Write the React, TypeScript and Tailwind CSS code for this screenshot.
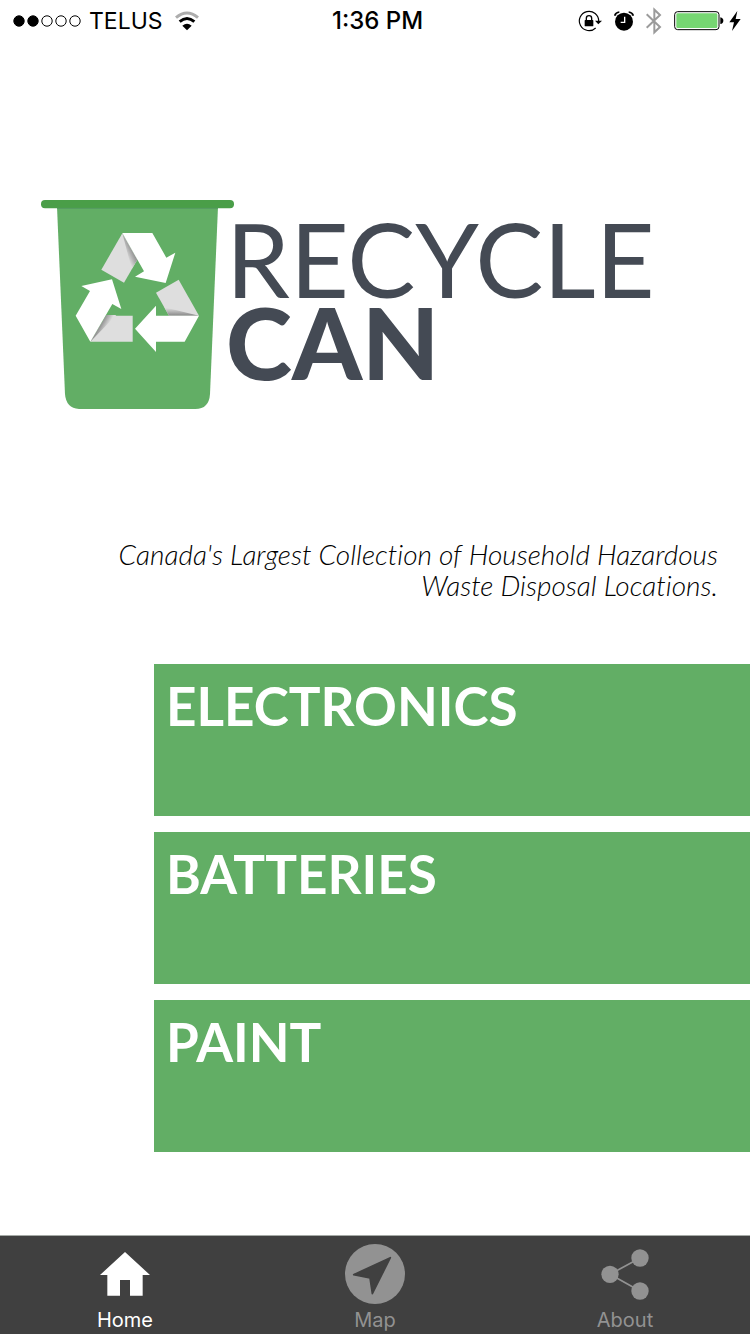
import type { ReactNode } from "react";

function StatusBar() {
  return (
    <header className="grid h-[41px] grid-cols-[1fr_auto_1fr] items-center pl-[13px] pr-2 font-['Inter',sans-serif] text-2xl leading-10 text-black">
      <div className="flex items-center">
        <svg width="68" height="12" viewBox="0 0 68 12" role="img" aria-label="Signal strength" fill="none" stroke="#000">
          <circle cx="6" cy="6" r="5.2" fill="#000" />
          <circle cx="20" cy="6" r="5.2" fill="#000" />
          <circle cx="34" cy="6" r="5.2" />
          <circle cx="48" cy="6" r="5.2" />
          <circle cx="62" cy="6" r="5.2" />
        </svg>
        <span className="ml-2 text-[23px]">TELUS</span>
        <svg className="ml-3" width="24" height="20" viewBox="0 0 72 60" role="img" aria-label="Wi-Fi" fill="none" strokeWidth="9">
          <path d="M3 20Q36-8 69 20" stroke="#adadad" />
          <path d="M14 32Q36 13 58 32" stroke="#000" />
          <path d="M22 44Q36 32 50 44L36 58Z" fill="#000" stroke="none" />
        </svg>
      </div>
      <time className="font-medium">1:36 PM</time>
      <div className="flex items-center justify-end">
        <svg width="24" height="22" viewBox="0 0 72 66" role="img" aria-label="Rotation lock">
          <path d="M62 34A29 29 0 1 0 53 54" fill="none" stroke="#000" strokeWidth="3.5" />
          <path d="M51 32H72L61 43Z" />
          <path d="M25 31V25a8 8 0 0 1 16 0v6" fill="none" stroke="#000" strokeWidth="4" />
          <rect x="20" y="30" width="26" height="19" rx="2" />
        </svg>
        <svg className="ml-3" width="20" height="20" viewBox="0 0 60 60" role="img" aria-label="Alarm">
          <circle cx="30" cy="32" r="27" />
          <path d="M2 14Q5 4 16 3M58 14Q55 4 44 3" fill="none" stroke="#000" strokeWidth="5" />
          <path d="M32 17V34H20" fill="none" stroke="#fff" strokeWidth="4" />
        </svg>
        <svg className="ml-3" width="16" height="28" viewBox="0 0 48 84" role="img" aria-label="Bluetooth" fill="none" stroke="#9b9b9b" strokeWidth="6">
          <path d="M2 22L42 60L25 76V8L42 24L2 62" />
        </svg>
        <svg className="ml-3" width="50" height="20" viewBox="0 0 150 60" role="img" aria-label="Battery">
          <rect x="2" y="2" width="133" height="54" rx="9" fill="#fff" stroke="#000" strokeWidth="3" />
          <rect x="7" y="7" width="123" height="44" rx="4" fill="#76d672" />
          <path d="M139 19Q148 21 148 29T139 39Z" />
        </svg>
        <svg className="ml-1" width="14" height="20" viewBox="0 0 42 60" role="img" aria-label="Charging">
          <path d="M28 0L4 34H18L12 60L38 24H23Z" />
        </svg>
      </div>
    </header>
  );
}

function BinLogo() {
  return (
    <svg width="193" height="209" viewBox="33 30 579 627" role="img" aria-label="Recycling bin" className="shrink-0">
      <defs>
        <linearGradient id="foldTop" gradientUnits="userSpaceOnUse" x1="288" y1="194" x2="312" y2="183">
          <stop offset="0" stopColor="#dedede" />
          <stop offset="1" stopColor="#888" />
        </linearGradient>
        <linearGradient id="foldRight" gradientUnits="userSpaceOnUse" x1="440" y1="354" x2="440" y2="377">
          <stop offset="0" stopColor="#dedede" />
          <stop offset="1" stopColor="#888" />
        </linearGradient>
        <linearGradient id="foldLeft" gradientUnits="userSpaceOnUse" x1="210" y1="400" x2="232" y2="412">
          <stop offset="0" stopColor="#858585" />
          <stop offset="1" stopColor="#dedede" />
        </linearGradient>
      </defs>
      <path d="M81 50H564L540 612Q537 657 496 657H147Q108 654 105 612Z" fill="#62ae65" />
      <rect x="33" y="30" width="579" height="25" rx="12" fill="#4a9e48" />
      <path d="M81 55H564" stroke="#569b63" strokeWidth="3" />
      <path d="M277 130L214 239L282 278L322 209Z" fill="#dedede" />
      <path d="M277 130L305 237L322 209Z" fill="url(#foldTop)" />
      <path d="M277 129H367L409 203L436 188L407 279L315 260L342 244Z" fill="#fff" />
      <path d="M446 269L378 308L417 377H507Z" fill="#dedede" />
      <path d="M403 352L507 377H417Z" fill="url(#foldRight)" />
      <path d="M507 377L464 455H378V486L315 416L378 347V377Z" fill="#fff" />
      <path d="M181 455H308V377H229Z" fill="#dedede" />
      <path d="M181 455L229 375H259Z" fill="url(#foldLeft)" />
      <path d="M181 455L137 377L180 303L154 288L246 268L274 357L247 342Z" fill="#fff" />
    </svg>
  );
}

const categories = ["ELECTRONICS", "BATTERIES", "PAINT"];

function Tab({ label, active = false, children }: { label: string; active?: boolean; children: ReactNode }) {
  return (
    <a
      href={`#${label.toLowerCase()}`}
      aria-current={active ? "page" : undefined}
      className={`flex flex-col items-center ${active ? "text-white" : "text-[#929292]"}`}
    >
      <span className="flex h-[76px] items-center">{children}</span>
      <span className="text-xl leading-4">{label}</span>
    </a>
  );
}

export default function App() {
  return (
    <div className="flex min-h-screen flex-col bg-white font-['Lato',sans-serif]">
      <StatusBar />
      <main className="flex-1">
        <h1 className="flex items-start px-[41px] pt-[159px] text-[#444a54]">
          <BinLogo />
          <span className="-ml-2 flex flex-col pt-[17px] leading-[83px]">
            <span className="text-[102px]">RECYCLE</span>
            <span className="text-[100px] font-black">CAN</span>
          </span>
        </h1>
        <p className="ml-auto max-w-[680px] px-8 pt-[130px] text-right text-[28px] font-light italic leading-[31px] text-black [font-variant-ligatures:no-common-ligatures]">
          Canada's Largest Collection of Household Hazardous Waste Disposal Locations.
        </p>
        <nav aria-label="Categories" className="flex flex-col gap-4 pb-20 pl-[154px] pt-[63px]">
          {categories.map((name) => (
            <button
              key={name}
              type="button"
              className="flex h-[152px] items-start bg-[#62ae65] px-3 pt-[11px] text-left text-[53px] font-bold leading-[62px] text-white"
            >
              {name}
            </button>
          ))}
        </nav>
      </main>
      <nav aria-label="Main" className="grid h-[99px] grid-cols-3 border-t border-[#a5aaa6] bg-[#404040] font-['Inter',sans-serif]">
        <Tab label="Home" active>
          <svg width="50" height="44" viewBox="0 0 150 132" fill="currentColor" aria-hidden="true">
            <path d="M75 0L150 69H128V131H90V84H60V131H22V69H0Z" />
          </svg>
        </Tab>
        <Tab label="Map">
          <svg width="60" height="60" viewBox="0 0 180 180" aria-hidden="true">
            <circle cx="90" cy="90" r="90" fill="currentColor" />
            <path d="M26 92L136 41L82 149L75 102Z" fill="#404040" stroke="#404040" strokeWidth="5" strokeLinejoin="round" />
          </svg>
        </Tab>
        <Tab label="About">
          <svg width="48" height="51" viewBox="0 0 144 153" fill="currentColor" aria-hidden="true">
            <path d="M117 27L27 76L117 126" fill="none" stroke="currentColor" strokeWidth="5" />
            <circle cx="117" cy="27" r="26" />
            <circle cx="27" cy="76" r="26" />
            <circle cx="117" cy="126" r="26" />
          </svg>
        </Tab>
      </nav>
    </div>
  );
}
